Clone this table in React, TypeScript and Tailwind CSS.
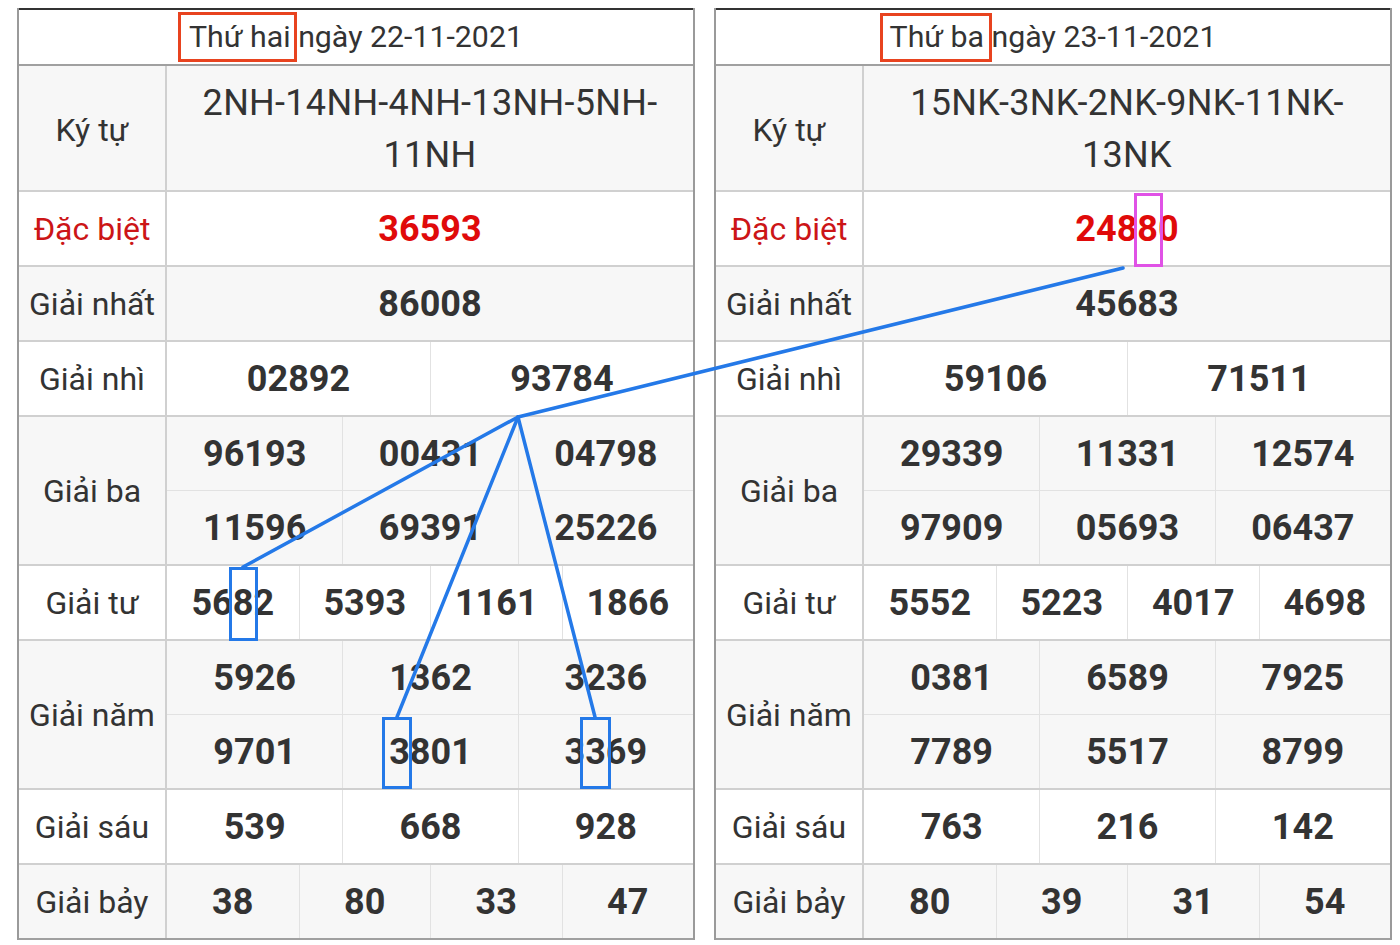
import React from "react";

type Day = {
  title: [string, string];
  kyTu: string[];
  db: string;
  g1: string;
  g2: string[];
  g3: string[];
  g4: string[];
  g5: string[];
  g6: string[];
  g7: string[];
};

const days: Day[] = [
  {
    title: ["Thứ hai", "ngày 22-11-2021"],
    kyTu: ["2NH-14NH-4NH-13NH-5NH-", "11NH"],
    db: "36593",
    g1: "86008",
    g2: ["02892", "93784"],
    g3: ["96193", "00431", "04798", "11596", "69391", "25226"],
    g4: ["5682", "5393", "1161", "1866"],
    g5: ["5926", "1362", "3236", "9701", "3801", "3369"],
    g6: ["539", "668", "928"],
    g7: ["38", "80", "33", "47"],
  },
  {
    title: ["Thứ ba", "ngày 23-11-2021"],
    kyTu: ["15NK-3NK-2NK-9NK-11NK-", "13NK"],
    db: "24880",
    g1: "45683",
    g2: ["59106", "71511"],
    g3: ["29339", "11331", "12574", "97909", "05693", "06437"],
    g4: ["5552", "5223", "4017", "4698"],
    g5: ["0381", "6589", "7925", "7789", "5517", "8799"],
    g6: ["763", "216", "142"],
    g7: ["80", "39", "31", "54"],
  },
];

const gridCols: Record<number, string> = {
  1: "grid-cols-1",
  2: "grid-cols-2",
  3: "grid-cols-3",
  4: "grid-cols-4",
};

function Row({
  label,
  values,
  cols,
  gray,
  red,
  last,
}: {
  label: string;
  values: string[];
  cols: number;
  gray?: boolean;
  red?: boolean;
  last?: boolean;
}) {
  return (
    <div
      className={`flex border-b-2 ${last ? "border-[#a0a0a0]" : "border-[#d0d0d0]"} ${
        gray ? "bg-[#f7f7f7]" : "bg-white"
      }`}
    >
      <div
        className={`w-[148px] shrink-0 flex items-center justify-center border-r-2 border-[#d0d0d0] text-[32px] ${
          red ? "text-[#cc1517]" : "text-[#333]"
        }`}
      >
        {label}
      </div>
      <div className={`flex-1 grid ${gridCols[cols]}`}>
        {values.map((v, i) => (
          <div
            key={i}
            className={`flex items-center justify-center text-[36px] font-bold ${
              red ? "text-[#e00a0a]" : "text-[#333]"
            } ${i % cols !== 0 ? "border-l border-[#e2e2e2]" : ""} ${
              i >= cols ? "h-[74px] border-t border-[#e2e2e2]" : "h-[73px]"
            }`}
          >
            {v}
          </div>
        ))}
      </div>
    </div>
  );
}

function ResultTable({ day }: { day: Day }) {
  return (
    <div className="w-[678px] border-l-2 border-r-2 border-[#9a9a9a]">
      <div className="h-[58px] flex items-center justify-center border-t-2 border-t-[#333] border-b-2 border-b-[#a0a0a0] bg-white text-[30.3px] text-[#333]">
        {day.title[0]} {day.title[1]}
      </div>
      <div className="flex border-b-2 border-[#d0d0d0] bg-[#f7f7f7]">
        <div className="w-[148px] shrink-0 flex items-center justify-center pt-[3px] border-r-2 border-[#d0d0d0] text-[32px] text-[#333]">
          Ký tự
        </div>
        <div className="flex-1 h-[124px] flex flex-col items-center justify-center pt-[2px] text-[36px] leading-[52px] text-[#333] tracking-[0.3px]">
          {day.kyTu.map((l) => (
            <span key={l}>{l}</span>
          ))}
        </div>
      </div>
      <Row label="Đặc biệt" values={[day.db]} cols={1} red />
      <Row label="Giải nhất" values={[day.g1]} cols={1} gray />
      <Row label="Giải nhì" values={day.g2} cols={2} />
      <Row label="Giải ba" values={day.g3} cols={3} gray />
      <Row label="Giải tư" values={day.g4} cols={4} />
      <Row label="Giải năm" values={day.g5} cols={3} gray />
      <Row label="Giải sáu" values={day.g6} cols={3} />
      <Row label="Giải bảy" values={day.g7} cols={4} gray last />
    </div>
  );
}

export default function App() {
  return (
    <div className="relative w-[1400px] h-[945px] bg-white font-['Roboto',sans-serif] overflow-hidden">
      <div className="flex gap-[19px] pl-[17px] pt-[8px]">
        {days.map((d) => (
          <ResultTable key={d.db} day={d} />
        ))}
      </div>

      <svg
        className="absolute inset-0 pointer-events-none"
        width="1400"
        height="945"
        viewBox="0 0 1400 945"
        fill="none"
      >
        <rect x="179.5" y="13.5" width="116" height="47" stroke="#e8431f" strokeWidth="3" />
        <rect x="881.5" y="14.5" width="109" height="46" stroke="#e8431f" strokeWidth="3" />
        <rect x="1135.5" y="194.5" width="26" height="71" stroke="#e052e6" strokeWidth="3" />
        <g stroke="#2479e8" strokeWidth="3.5" strokeLinecap="round">
          <line x1="1123" y1="268" x2="518" y2="417" />
          <line x1="518" y1="417" x2="243" y2="567" />
          <line x1="518" y1="417" x2="397" y2="717" />
          <line x1="518" y1="417" x2="595" y2="717" />
        </g>
        <g stroke="#2479e8" strokeWidth="3">
          <rect x="230.5" y="568.5" width="26" height="71" />
          <rect x="383.5" y="718.5" width="27" height="69" />
          <rect x="581.5" y="718.5" width="28" height="69" />
        </g>
      </svg>
    </div>
  );
}
